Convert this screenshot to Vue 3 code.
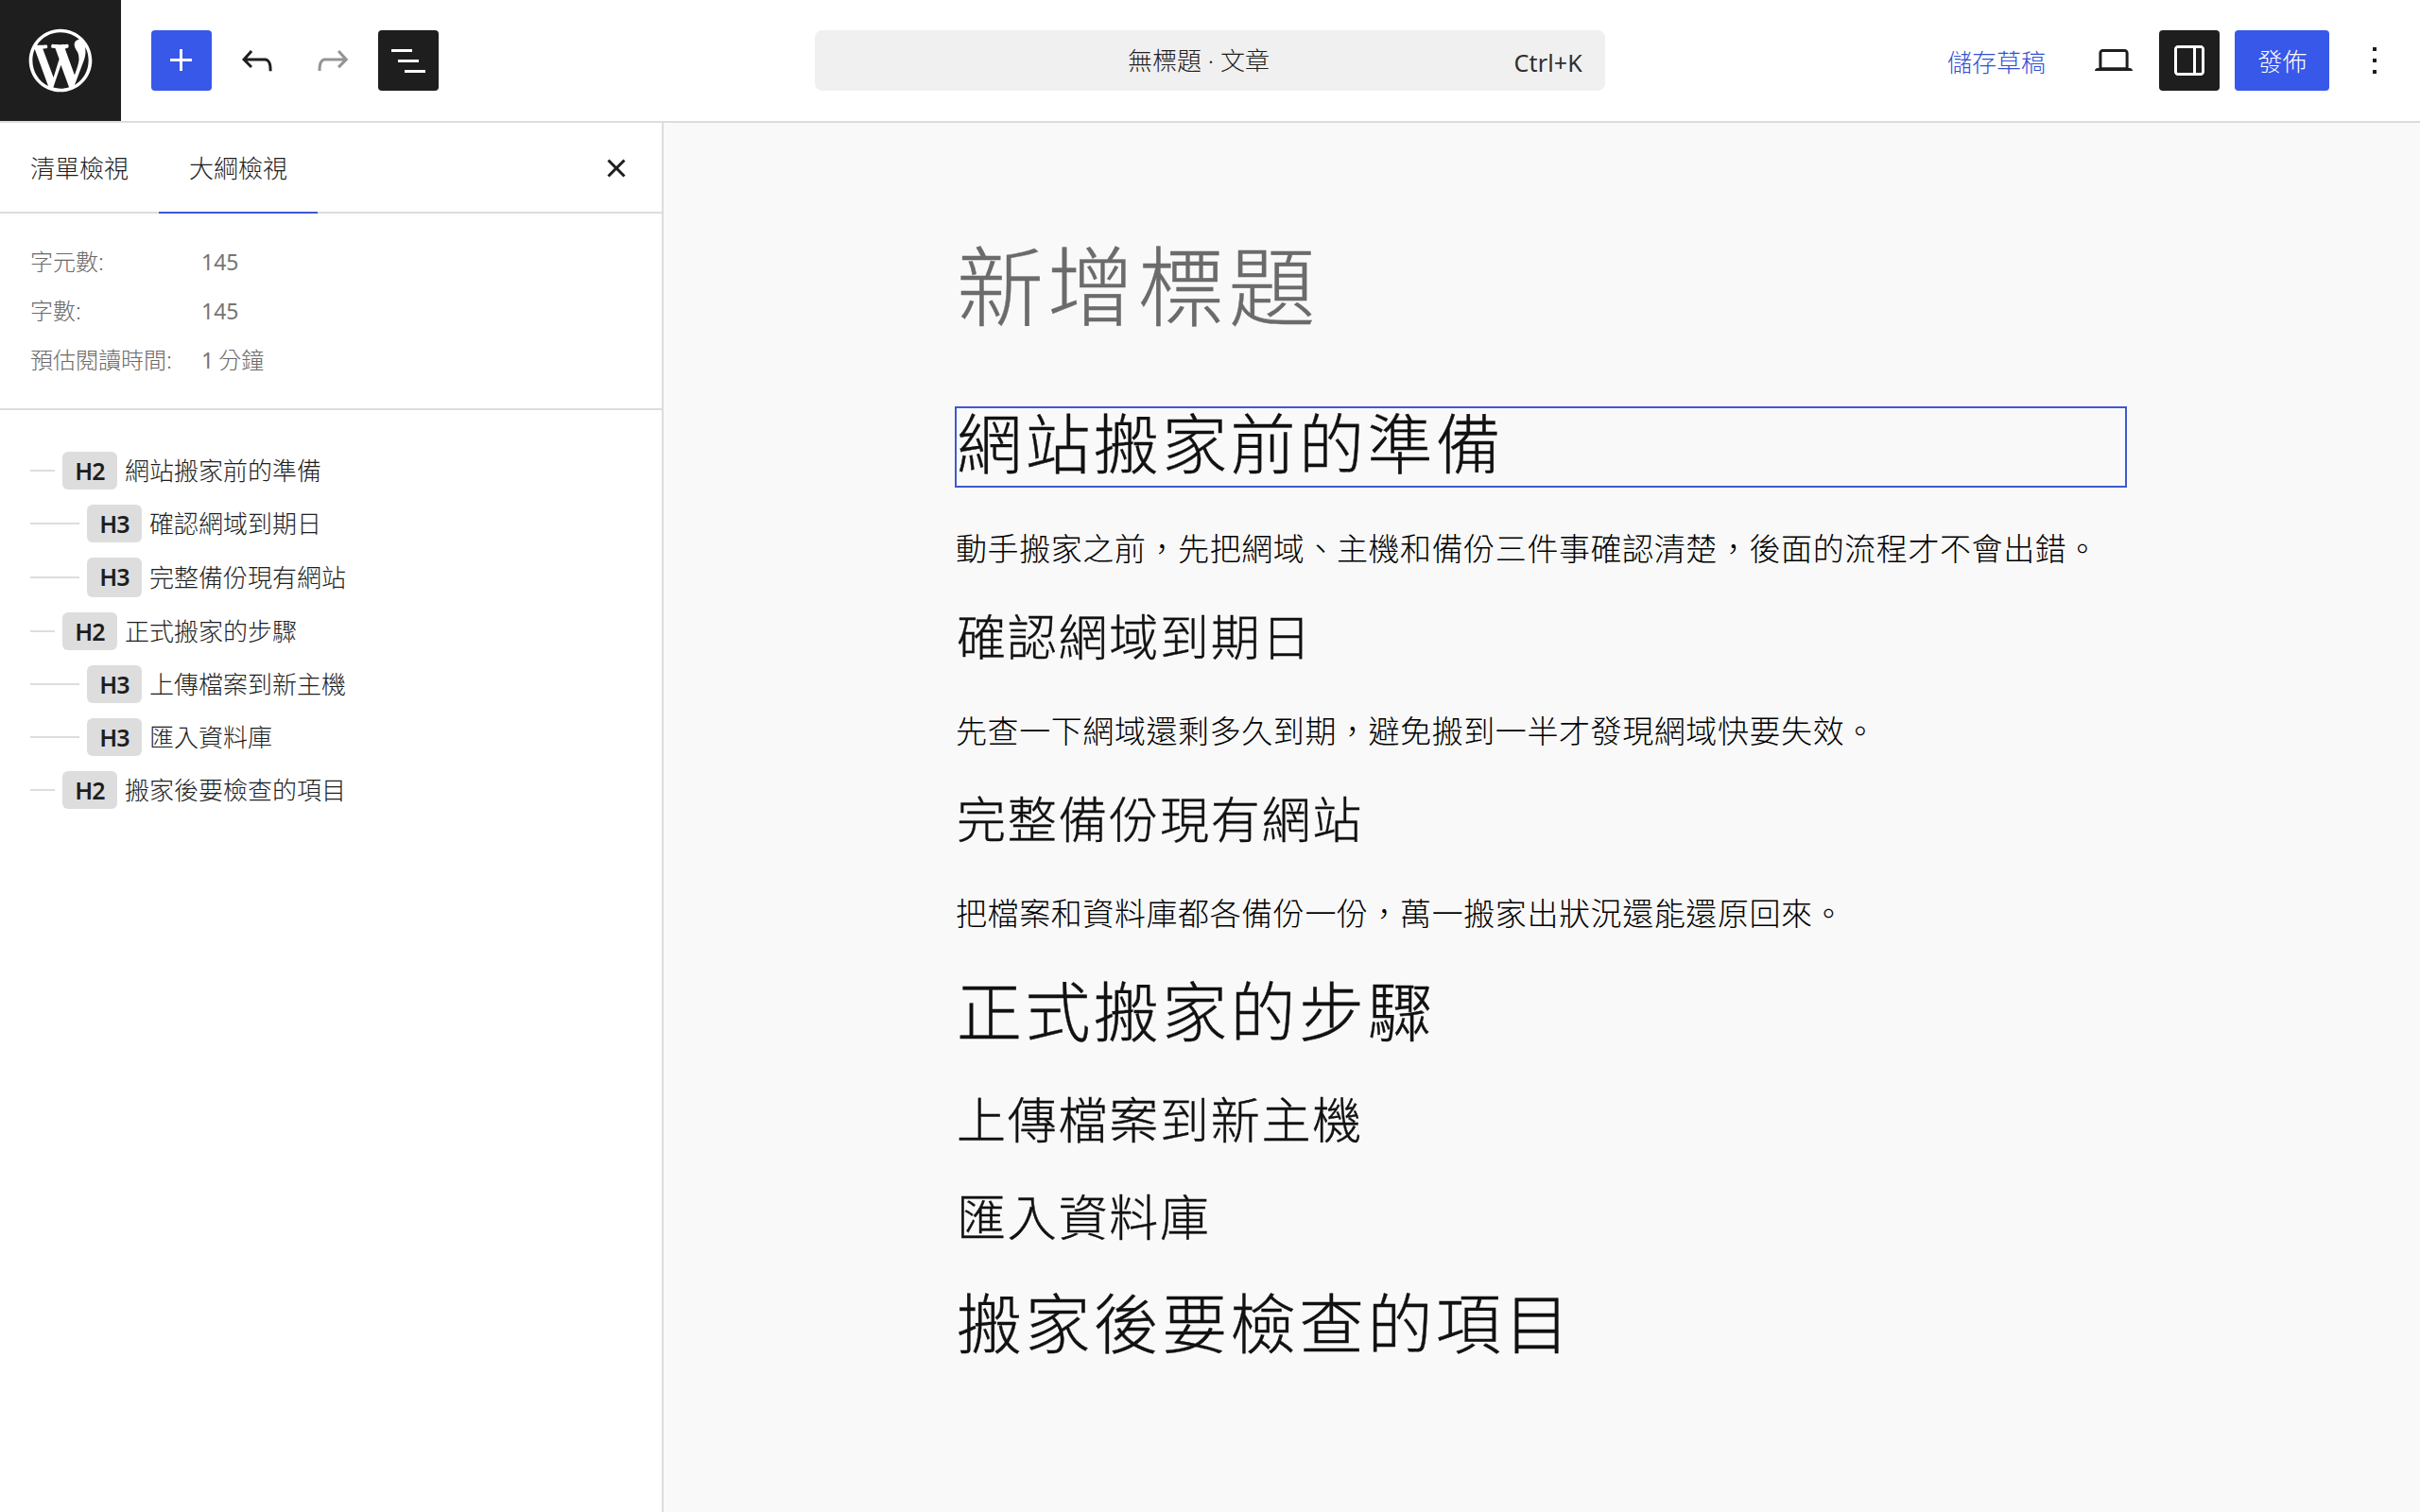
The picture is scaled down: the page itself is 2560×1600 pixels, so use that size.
<template>
  <div class="editor">
    <!-- Top toolbar -->
    <header class="header">
      <div class="site-logo">
        <svg width="80" height="80" viewBox="-2 -2 24 24">
          <path d="M20 10c0-5.51-4.49-10-10-10C4.48 0 0 4.49 0 10c0 5.52 4.48 10 10 10 5.51 0 10-4.48 10-10zM7.78 15.37L4.37 6.22c.55-.02 1.17-.08 1.17-.08.5-.06.44-1.13-.06-1.11 0 0-1.45.11-2.37.11-.18 0-.37 0-.58-.01C4.12 2.69 6.87 1.11 10 1.11c2.33 0 4.45.87 6.05 2.34-.68-.11-1.65.39-1.65 1.58 0 .74.45 1.36.9 2.1.35.61.55 1.36.55 2.46 0 1.49-1.4 5-1.4 5l-3.03-8.37c.54-.02.82-.17.82-.17.5-.05.44-1.25-.06-1.22 0 0-1.44.12-2.38.12-.87 0-2.33-.12-2.33-.12-.5-.03-.56 1.2-.06 1.22l.92.08 1.26 3.41zM17.41 10c.24-.64.74-1.87.43-4.25.7 1.29 1.05 2.71 1.05 4.25 0 3.29-1.73 6.24-4.4 7.78.97-2.59 1.94-5.2 2.92-7.78zM6.1 18.09C3.12 16.65 1.11 13.53 1.11 10c0-1.3.23-2.48.72-3.59C3.25 10.3 4.67 14.2 6.1 18.09zm4.03-6.63l2.58 6.98c-.86.29-1.76.45-2.71.45-.79 0-1.57-.11-2.29-.33.81-2.38 1.62-4.74 2.42-7.1z" />
        </svg>
      </div>

      <div class="tools">
        <button
          v-for="tool in tools"
          :key="tool.name"
          class="icon-button"
          :class="tool.variant"
        >
          <svg class="icon" viewBox="0 0 24 24"><path :d="tool.path" /></svg>
        </button>
      </div>

      <div class="command-bar">
        <span class="document-title">無標題 · 文章</span>
        <span class="shortcut">Ctrl+K</span>
      </div>

      <div class="settings">
        <button class="save-draft">儲存草稿</button>
        <button class="icon-button">
          <svg class="icon" viewBox="0 0 24 24">
            <path d="M20.5 16h-.7V8c0-1.1-.9-2-2-2H6.2c-1.1 0-2 .9-2 2v8h-.7c-.8 0-1.5.7-1.5 1.5h20c0-.8-.7-1.5-1.5-1.5zM5.7 8c0-.3.2-.5.5-.5h11.6c.3 0 .5.2.5.5v7.6H5.7V8z" />
          </svg>
        </button>
        <button class="icon-button dark">
          <svg class="icon" viewBox="0 0 24 24">
            <path fill-rule="evenodd" d="M18 4H6c-1.1 0-2 .9-2 2v12c0 1.1.9 2 2 2h12c1.1 0 2-.9 2-2V6c0-1.1-.9-2-2-2zm-4 14.5H6c-.3 0-.5-.2-.5-.5V6c0-.3.2-.5.5-.5h8v13zm4.5-.5c0 .3-.2.5-.5.5h-2.5v-13H18c.3 0 .5.2.5.5v12z" />
          </svg>
        </button>
        <button class="publish">發佈</button>
        <button class="icon-button">
          <svg class="icon" viewBox="0 0 24 24">
            <path d="M13 19h-2v-2h2v2zm0-6h-2v-2h2v2zm0-6h-2V5h2v2z" />
          </svg>
        </button>
      </div>
    </header>

    <div class="body">
      <!-- Document overview -->
      <aside class="sidebar">
        <div class="tabs">
          <button
            v-for="tab in tabs"
            :key="tab"
            class="tab"
            :class="{ active: tab === activeTab }"
            @click="activeTab = tab"
          >
            {{ tab }}
          </button>
          <button class="close">
            <svg class="icon" viewBox="0 0 24 24">
              <path d="M12 13.06l3.712 3.713 1.061-1.06L13.061 12l3.712-3.712-1.06-1.06L12 10.938 8.288 7.227l-1.061 1.06L10.939 12l-3.712 3.712 1.06 1.061L12 13.061z" />
            </svg>
          </button>
        </div>

        <div class="stats">
          <div v-for="stat in stats" :key="stat.label" class="stat">
            <span class="stat-label">{{ stat.label }}</span>
            <span class="stat-value">{{ stat.value }}</span>
            <span v-if="stat.unit">{{ stat.unit }}</span>
          </div>
        </div>

        <ul class="outline">
          <li
            v-for="heading in headings"
            :key="heading.text"
            class="outline-item"
            :class="heading.type"
          >
            <span class="dash"></span>
            <strong class="level">{{ heading.type.toUpperCase() }}</strong>
            <span class="outline-text">{{ heading.text }}</span>
          </li>
        </ul>
      </aside>

      <!-- Post content -->
      <main class="canvas">
        <h1 class="post-title">新增標題</h1>
        <component
          :is="block.type"
          v-for="(block, index) in blocks"
          :key="index"
          class="block"
          :class="{ selected: index === selectedBlock }"
          @click="selectedBlock = index"
        >
          <span class="block-text">{{ block.text }}</span>
        </component>
      </main>
    </div>
  </div>
</template>

<script setup>
import { computed, ref } from "vue";

const tools = [
  {
    name: "inserter",
    variant: "primary",
    path: "M11 12.5V17.5H12.5V12.5H17.5V11H12.5V6H11V11H6V12.5H11Z",
  },
  {
    name: "undo",
    variant: "",
    path: "M18.3 11.7c-.6-.6-1.4-.9-2.3-.9H6.7l2.9-3.3-1.1-1-4.5 5L8.5 16l1-1-2.7-2.7H16c.5 0 .9.2 1.3.5 1 1 1 3.4 1 4.5v.3h1.5v-.2c0-1.5 0-4.3-1.5-5.7z",
  },
  {
    name: "redo",
    variant: "disabled",
    path: "M15.6 6.5l-1.1 1 2.9 3.3H8c-.9 0-1.7.3-2.3.9-1.4 1.5-1.4 4.2-1.4 5.6v.2h1.5v-.3c0-1.1 0-3.5 1-4.5.3-.3.7-.5 1.3-.5h9.2L14.5 15l1.1 1.1 4.6-4.6-4.6-5z",
  },
  {
    name: "overview",
    variant: "dark",
    path: "M3 6h11v1.5H3V6Zm3.5 5.5h11V13h-11v-1.5ZM21 17H10v1.5h11V17Z",
  },
];

const tabs = ["清單檢視", "大綱檢視"];
const activeTab = ref("大綱檢視");

const stats = [
  { label: "字元數:", value: "145" },
  { label: "字數:", value: "145" },
  { label: "預估閱讀時間:", value: "1", unit: "分鐘" },
];

const blocks = [
  { type: "h2", text: "網站搬家前的準備" },
  {
    type: "p",
    text: "動手搬家之前，先把網域、主機和備份三件事確認清楚，後面的流程才不會出錯。",
  },
  { type: "h3", text: "確認網域到期日" },
  {
    type: "p",
    text: "先查一下網域還剩多久到期，避免搬到一半才發現網域快要失效。",
  },
  { type: "h3", text: "完整備份現有網站" },
  {
    type: "p",
    text: "把檔案和資料庫都各備份一份，萬一搬家出狀況還能還原回來。",
  },
  { type: "h2", text: "正式搬家的步驟" },
  { type: "h3", text: "上傳檔案到新主機" },
  { type: "h3", text: "匯入資料庫" },
  { type: "h2", text: "搬家後要檢查的項目" },
];
const selectedBlock = ref(0);

const headings = computed(() => blocks.filter((block) => block.type !== "p"));
</script>

<style>
body {
  margin: 0;
}
</style>

<style scoped>
.editor {
  display: flex;
  flex-direction: column;
  width: 100%;
  height: 100vh;
  overflow: hidden;
  background: #fff;
  color: #1e1e1e;
  font-family: "Noto Sans", "Noto Sans CJK TC", sans-serif;
  font-weight: 300;
  font-size: 26px;
}

button {
  display: flex;
  align-items: center;
  justify-content: center;
  padding: 0;
  border: none;
  background: none;
  color: inherit;
  font: inherit;
}

.icon {
  width: 48px;
  height: 48px;
  fill: currentColor;
}

/* Header */
.header {
  display: grid;
  grid-template-areas: "left center right";
  grid-template-columns: 862px 836px 1fr;
  align-items: center;
  height: 128px;
  border-bottom: 2px solid #ddd;
}

.site-logo {
  grid-area: left;
  display: flex;
  align-items: center;
  justify-content: center;
  width: 128px;
  height: 128px;
  background: #1e1e1e;
  fill: #fff;
}

.tools {
  grid-area: left;
  display: flex;
  gap: 16px;
  margin-left: 160px;
}

.icon-button {
  width: 64px;
  height: 64px;
  border-radius: 4px;
}

.icon-button.primary {
  background: #3858e9;
  color: #fff;
}

.icon-button.dark {
  background: #1e1e1e;
  color: #fff;
}

.icon-button.disabled {
  color: #949494;
}

.command-bar {
  grid-area: center;
  display: grid;
  grid-template-columns: 1fr auto 1fr;
  align-items: center;
  box-sizing: border-box;
  height: 64px;
  padding-right: 24px;
  border-radius: 8px;
  background: #f0f0f0;
}

.document-title {
  grid-column: 2;
  padding-bottom: 3px;
}

.shortcut {
  justify-self: end;
  padding-top: 3px;
  color: #2f2f2f;
  font-size: 25px;
  font-weight: 400;
  letter-spacing: 0.2px;
}

.settings {
  grid-area: right;
  display: flex;
  align-items: center;
  justify-content: flex-end;
  gap: 16px;
  padding-right: 16px;
}

.save-draft {
  margin-right: 24px;
  padding-top: 1px;
  color: #3350d2;
}

.publish {
  width: 100px;
  height: 64px;
  padding-left: 1px;
  border-radius: 4px;
  background: #3858e9;
  color: #fff;
}

.body {
  display: flex;
  flex: 1;
  min-height: 0;
}

/* Sidebar */
.sidebar {
  width: 700px;
  border-right: 2px solid #ddd;
}

.tabs {
  display: flex;
  height: 94px;
  border-bottom: 2px solid #ddd;
}

.tab {
  width: 168px;
  height: 96px;
  padding-bottom: 1px;
  border-bottom: 2px solid transparent;
}

.tab.active {
  border-bottom-color: #3f58cf;
}

.close {
  width: 48px;
  height: 96px;
  margin-left: auto;
  margin-right: 24px;
}

.stats {
  display: flex;
  flex-direction: column;
  gap: 16px;
  box-sizing: border-box;
  height: 208px;
  padding: 33px 32px 0;
  border-bottom: 2px solid #ddd;
  color: #6a6a6a;
  font-size: 24px;
  line-height: 36px;
}

.stat {
  display: flex;
}

.stat-label {
  width: 181px;
}

.stat-value {
  margin-right: 5px;
  color: #757575;
  font-size: 23px;
  font-weight: 400;
}

.outline {
  margin: 0;
  padding: 36px 32px;
  list-style: none;
}

.outline-item {
  display: flex;
  align-items: center;
  height: 56px;
}

.outline-item:nth-child(3) {
  height: 58px;
}

.dash {
  width: 26px;
  height: 2px;
  margin-right: 8px;
  background: #ddd;
}

.h3 .dash {
  width: 52px;
}

.level {
  width: 58px;
  height: 40px;
  margin-right: 8px;
  border-radius: 6px;
  background: #ddd;
  font-size: 25px;
  font-weight: 600;
  letter-spacing: -0.8px;
  line-height: 40px;
  text-align: center;
}

.outline-item:nth-child(3) .level {
  height: 42px;
}

.outline-text {
  line-height: 39px;
}

/* Canvas */
.canvas {
  flex: 1;
  padding: 118px 308px 0;
  background: #f9f9f9;
  color: #111;
}

.block,
.post-title {
  margin: 0;
  font-weight: 300;
  -webkit-text-stroke: 0.4px currentColor;
}

.post-title {
  height: 182px;
  padding-left: 2px;
  color: #6b6b6b;
  font-size: 92px;
  letter-spacing: 3.8px;
  line-height: 110px;
}

.block {
  width: 1240px;
  margin-bottom: 38.4px;
}

.block-text {
  display: block;
  padding-left: 2px;
  white-space: nowrap;
}

h2.block {
  height: 86.4px;
  font-size: 69px;
  letter-spacing: 3.4px;
  line-height: 78px;
}

h3.block {
  height: 64.3px;
  font-size: 52px;
  letter-spacing: 1.75px;
  line-height: 57px;
}

p.block {
  height: 52px;
  color: #000;
  font-size: 33px;
  letter-spacing: 0.58px;
  line-height: 52px;
  -webkit-text-stroke-width: 0;
}

p .block-text {
  padding-left: 1px;
}

.selected {
  outline: 2px solid #3f58cf;
  outline-offset: -2px;
}
</style>
